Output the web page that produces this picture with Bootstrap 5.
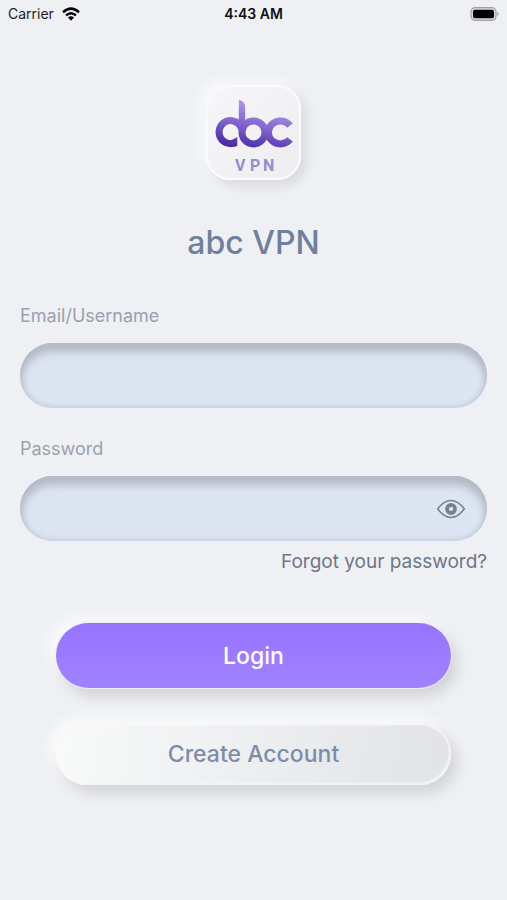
<!DOCTYPE html>
<html lang="en">
<head>
<meta charset="utf-8">
<meta name="viewport" content="width=device-width, initial-scale=1">
<title>abc VPN</title>
<link href="https://cdn.jsdelivr.net/npm/bootstrap@5.3.0/dist/css/bootstrap.min.css" rel="stylesheet">
<style>
body { background: #eef0f4; font-family: Inter, "Liberation Sans", sans-serif; }
.status-bar { height: 28px; padding: 0 8px; font-size: 14px; line-height: 28px; color: #1c1c1e; }
.status-time { font-weight: 600; color: #111; }
.form-area { padding: 57px 20px 80px; }
.app-logo { width: 95px; height: 95px; border-radius: 24px; border: 2px solid #fafbfc;
  background: linear-gradient(135deg, #f7f7f9, #ededf0);
  box-shadow: 6px 6px 12px rgba(0,0,0,.09), -6px -6px 14px rgba(255,255,255,.6); }
.app-title { margin: 41px 0 0; font-size: 32px; line-height: 44px; font-weight: 500; color: #6e809c; }
.field-label { margin: 29px 0 15px; font-size: 18px; line-height: 24px; color: #9ba1b0; }
.first-label { margin-top: 39px; }
.inset-field, .inset-field:focus { height: 65px; padding: 0 28px; border: 0; font-size: 20px;
  background: #dde5f3; color: #6e809c;
  box-shadow: inset 0 8px 8px 1px #b3bac6, inset 0 0 6px 1px #c0cad8; }
.inset-field.with-eye { padding-right: 64px; }
.eye-btn { right: 21px; top: 50%; transform: translateY(-50%); line-height: 0; }
.forgot-row { margin-top: 9px; line-height: 24px; }
.forgot-link { font-size: 19px; color: #6c7689; }
.action-area { padding: 49px 36px 0; gap: 35px; }
.action-btn { height: 65px; border: 0; font-size: 23px; line-height: 30px; }
.action-btn.login, .action-btn.login:hover { color: #fff; font-weight: 500; background: linear-gradient(#9873fe, #9f83ff);
  box-shadow: 0 0 1px 1px #f0edff, 6px 8px 14px rgba(0,0,0,.13), -8px -8px 16px rgba(255,255,255,.6); }
.action-btn.create, .action-btn.create:hover { height: 62px; color: #7b8ea9; font-weight: 500;
  background: linear-gradient(100deg, #f9fafa, #eceef0 50%, #e1e3e7);
  box-shadow: inset -2px -2px 2px #f4f5f7, inset 0 2px 2px #f8f9fa, 6px 8px 14px rgba(0,0,0,.12), -6px -6px 14px rgba(255,255,255,.8); }
</style>
</head>
<body>
<header class="status-bar row g-0 align-items-center">
  <div class="col d-flex align-items-center gap-2">
    <span>Carrier</span>
    <svg width="18" height="14" viewBox="0 0 18 14" fill="none" stroke="#000" stroke-width="2.5" aria-hidden="true">
      <path d="M1 5.2Q9-2 17 5.2M4 8.4Q9 4 14 8.4"/>
      <path d="M6 10.5Q9 8 12 10.5L9 13.7Z" fill="#000" stroke="none"/>
    </svg>
  </div>
  <div class="col-auto status-time">4:43 AM</div>
  <div class="col d-flex justify-content-end">
    <svg width="30" height="14" viewBox="0 0 30 14" aria-hidden="true">
      <rect x="2" y="0.7" width="25" height="12.6" rx="4" fill="#d7d8da" stroke="#a0a1a4" stroke-width="1.2"/>
      <rect x="4" y="2.7" width="21" height="8.6" rx="2" fill="#000"/>
      <path d="M28.2 4.8q3 2.2 0 4.4z" fill="#a0a1a4"/>
    </svg>
  </div>
</header>
<main class="form-area">
  <div class="app-logo mx-auto">
    <svg class="d-block" width="91" height="91" viewBox="0 0 91 91" role="img" aria-label="abc VPN logo">
      <defs>
        <linearGradient id="ink" gradientUnits="userSpaceOnUse" x1="50" y1="14" x2="40" y2="62">
          <stop offset="0" stop-color="#b39ce9"/><stop offset=".5" stop-color="#8466d0"/><stop offset="1" stop-color="#4b2ba6"/>
        </linearGradient>
      </defs>
      <g fill="none" stroke="url(#ink)" stroke-width="7">
        <path d="M27.5 55.500A11.500 11.500 0 1 1 32 38.500L35 44"/>
        <circle cx="45.5" cy="45.400" r="11.5"/>
        <path d="M82 38.500A12 11.500 0 1 0 82 52.300"/>
      </g>
      <g fill="url(#ink)">
        <path d="M30.800 13Q37.200 14 37.200 20V42H30.800Z"/>
        <path d="M29.300 50V59Q27 59.500 24 59.700L24 53Z"/>
        <path d="M53 37Q58 40 63 37V54Q58 51 53 54L57 45Z"/>
      </g>
      <text x="27 42 55" y="84" fill="#9a8ad0" font-family="Roboto, sans-serif" font-size="16" font-weight="700">VPN</text>
    </svg>
  </div>
  <h1 class="app-title text-center">abc VPN</h1>
  <form>
    <label class="field-label first-label d-block" for="user">Email/Username</label>
    <input class="form-control rounded-pill inset-field" id="user" type="text" autocomplete="username">
    <label class="field-label d-block" for="pass">Password</label>
    <div class="position-relative">
      <input class="form-control rounded-pill inset-field with-eye" id="pass" type="password" autocomplete="current-password">
      <button type="button" class="btn p-0 border-0 position-absolute eye-btn" aria-label="Show password">
        <svg width="30" height="20" viewBox="0 0 30 20" fill="none" stroke="#79808f">
          <path d="M1.7 10Q8 1.6 15 1.6T28.3 10Q22 18.4 15 18.4T1.7 10Z" stroke-width="1.5"/>
          <circle cx="15" cy="10" r="4" stroke-width="3.8"/>
          <circle cx="16" cy="9" r="1" fill="#dde5f3" stroke="none"/>
        </svg>
      </button>
    </div>
    <div class="forgot-row text-end"><a class="forgot-link text-decoration-none" href="#">Forgot your password?</a></div>
    <div class="action-area d-flex flex-column">
      <button type="submit" class="btn rounded-pill action-btn login">Login</button>
      <button type="button" class="btn rounded-pill action-btn create">Create Account</button>
    </div>
  </form>
</main>
<script src="https://cdn.jsdelivr.net/npm/bootstrap@5.3.0/dist/js/bootstrap.bundle.min.js"></script>
</body>
</html>
